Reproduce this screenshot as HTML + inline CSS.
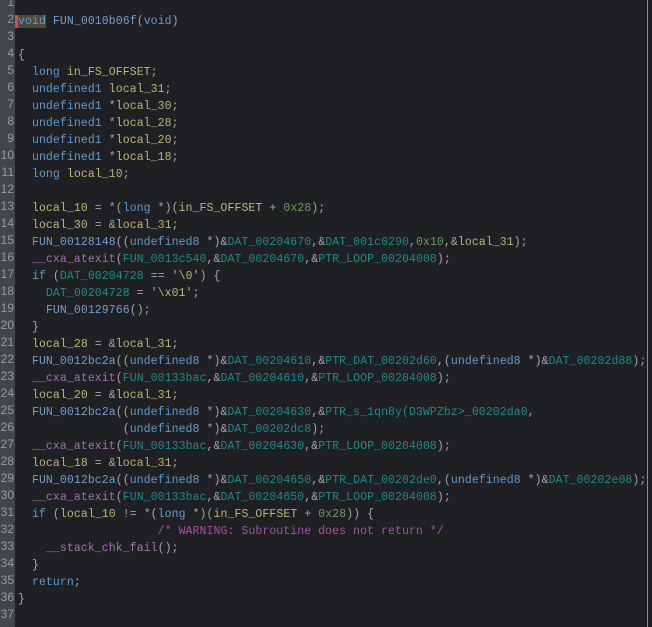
<!DOCTYPE html>
<html><head><meta charset="utf-8"><style>
html,body{margin:0;padding:0;}
body{width:652px;height:627px;overflow:hidden;background:#1f2023;position:relative;font-family:"Liberation Mono",monospace;font-size:11.5px;}
#g{position:absolute;left:0;top:0;width:15px;height:627px;background:#434649;}
#gn{position:absolute;left:0;top:-6.5px;width:14px;text-align:right;color:#9a9da0;font-family:"Liberation Sans",sans-serif;font-size:12px;line-height:17px;white-space:pre;}
#code{position:absolute;left:18px;top:-4.5px;white-space:pre;color:#a6a6a6;margin:0;font:inherit;line-height:17px;letter-spacing:0.08px;}
#rb{position:absolute;left:647px;top:0;width:1px;height:627px;background:#8a8a8a;}
.k{color:#5f9bcf}.f{color:#6f9fd0}.c{color:#a66fb8}.v{color:#bdb476}.g{color:#1d8b8b}.n{color:#6b9e5b}.s{color:#bdb476}.m{color:#a850a8}
.hl{background:#4b4a3d;box-shadow:-3px 0 0 #d05050;}
</style></head><body>
<div id="g"><div id="gn">1
2
3
4
5
6
7
8
9
10
11
12
13
14
15
16
17
18
19
20
21
22
23
24
25
26
27
28
29
30
31
32
33
34
35
36
37</div></div>
<pre id="code">

<span class="k hl">void</span> <span class="f">FUN_0010b06f</span>(<span class="k">void</span>)

{
  <span class="k">long</span> <span class="v">in_FS_OFFSET</span>;
  <span class="k">undefined1</span> <span class="v">local_31</span>;
  <span class="k">undefined1</span> *<span class="v">local_30</span>;
  <span class="k">undefined1</span> *<span class="v">local_28</span>;
  <span class="k">undefined1</span> *<span class="v">local_20</span>;
  <span class="k">undefined1</span> *<span class="v">local_18</span>;
  <span class="k">long</span> <span class="v">local_10</span>;

  <span class="v">local_10</span> = *(<span class="k">long</span> *)(<span class="v">in_FS_OFFSET</span> + <span class="n">0x28</span>);
  <span class="v">local_30</span> = &amp;<span class="v">local_31</span>;
  <span class="f">FUN_00128148</span>((<span class="k">undefined8</span> *)&amp;<span class="g">DAT_00204670</span>,&amp;<span class="g">DAT_001c0290</span>,<span class="n">0x10</span>,&amp;<span class="v">local_31</span>);
  <span class="c">__cxa_atexit</span>(<span class="g">FUN_0013c540</span>,&amp;<span class="g">DAT_00204670</span>,&amp;<span class="g">PTR_LOOP_00204008</span>);
  <span class="k">if</span> (<span class="g">DAT_00204728</span> == <span class="s">'\0'</span>) {
    <span class="g">DAT_00204728</span> = <span class="s">'\x01'</span>;
    <span class="f">FUN_00129766</span>();
  }
  <span class="v">local_28</span> = &amp;<span class="v">local_31</span>;
  <span class="f">FUN_0012bc2a</span>((<span class="k">undefined8</span> *)&amp;<span class="g">DAT_00204610</span>,&amp;<span class="g">PTR_DAT_00202d60</span>,(<span class="k">undefined8</span> *)&amp;<span class="g">DAT_00202d88</span>);
  <span class="c">__cxa_atexit</span>(<span class="g">FUN_00133bac</span>,&amp;<span class="g">DAT_00204610</span>,&amp;<span class="g">PTR_LOOP_00204008</span>);
  <span class="v">local_20</span> = &amp;<span class="v">local_31</span>;
  <span class="f">FUN_0012bc2a</span>((<span class="k">undefined8</span> *)&amp;<span class="g">DAT_00204630</span>,&amp;<span class="g">PTR_s_1qn8y(D3WPZbz&gt;_00202da0</span>,
               (<span class="k">undefined8</span> *)&amp;<span class="g">DAT_00202dc8</span>);
  <span class="c">__cxa_atexit</span>(<span class="g">FUN_00133bac</span>,&amp;<span class="g">DAT_00204630</span>,&amp;<span class="g">PTR_LOOP_00204008</span>);
  <span class="v">local_18</span> = &amp;<span class="v">local_31</span>;
  <span class="f">FUN_0012bc2a</span>((<span class="k">undefined8</span> *)&amp;<span class="g">DAT_00204650</span>,&amp;<span class="g">PTR_DAT_00202de0</span>,(<span class="k">undefined8</span> *)&amp;<span class="g">DAT_00202e08</span>);
  <span class="c">__cxa_atexit</span>(<span class="g">FUN_00133bac</span>,&amp;<span class="g">DAT_00204650</span>,&amp;<span class="g">PTR_LOOP_00204008</span>);
  <span class="k">if</span> (<span class="v">local_10</span> != *(<span class="k">long</span> *)(<span class="v">in_FS_OFFSET</span> + <span class="n">0x28</span>)) {
                    <span class="m">/* WARNING: Subroutine does not return */</span>
    <span class="c">__stack_chk_fail</span>();
  }
  <span class="k">return</span>;
}
</pre>
<div id="rb"></div>
</body></html>
